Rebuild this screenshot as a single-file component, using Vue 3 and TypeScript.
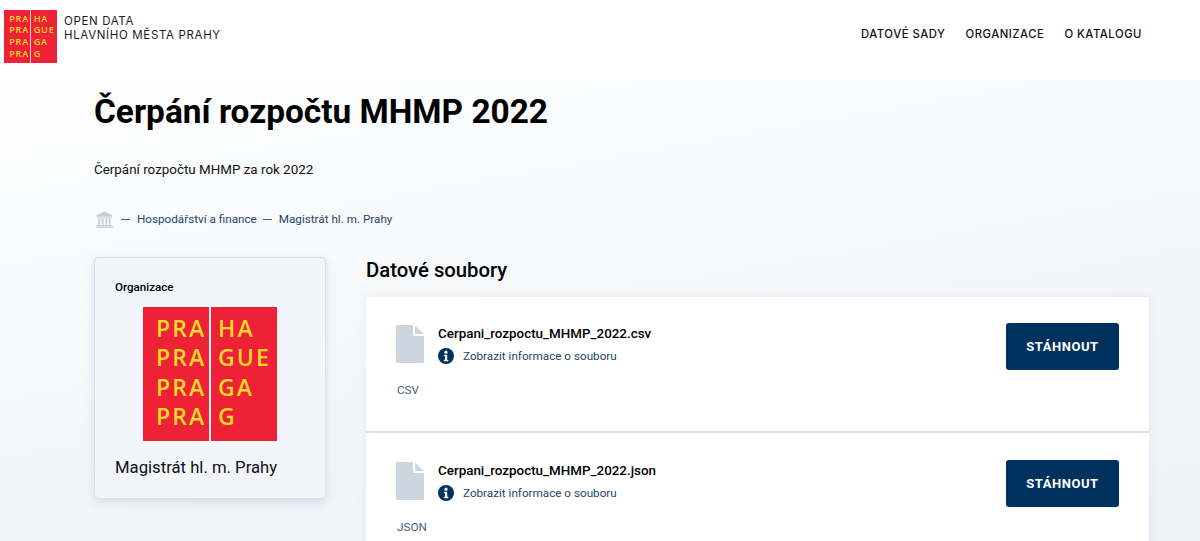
<template>
  <div class="page">
    <header class="top">
      <a class="brand">
        <svg class="logo-small" viewBox="0 0 134 134">
          <rect x="0" y="0" width="66" height="134" fill="#ef2136" />
          <rect x="68" y="0" width="66" height="134" fill="#ef2136" />
          <text v-for="(row, i) in logoRows" :key="i" :y="30 + i * 29.4" class="logo-text">
            <tspan x="13">{{ row[0] }}</tspan>
            <tspan x="75">{{ row[1] }}</tspan>
          </text>
        </svg>
        <span class="brand-name">OPEN DATA<br />HLAVNÍHO MĚSTA PRAHY</span>
      </a>
      <nav class="nav">
        <a v-for="item in nav" :key="item">{{ item }}</a>
      </nav>
    </header>

    <main class="main">
      <h1>Čerpání rozpočtu MHMP 2022</h1>
      <p class="lead">Čerpání rozpočtu MHMP za rok 2022</p>
      <div class="crumbs">
        <svg class="temple" viewBox="0 0 16 16">
          <path d="M8 0.5 15.5 4v1.4H.5V4z" />
          <rect x="1" y="6" width="14" height="1" />
          <rect x="2.2" y="7.4" width="1.7" height="5.4" />
          <rect x="5.4" y="7.4" width="1.7" height="5.4" />
          <rect x="8.9" y="7.4" width="1.7" height="5.4" />
          <rect x="12.1" y="7.4" width="1.7" height="5.4" />
          <rect x="1" y="13.2" width="14" height="1" />
          <rect x="0" y="14.5" width="16" height="1.2" />
        </svg>
        <span class="dash"></span>
        <span>Hospodářství a finance</span>
        <span class="dash"></span>
        <span>Magistrát hl. m. Prahy</span>
      </div>

      <div class="columns">
        <aside class="org">
          <div class="org-label">Organizace</div>
          <svg class="logo-big" viewBox="0 0 134 134">
            <rect x="0" y="0" width="66" height="134" fill="#ef2136" />
            <rect x="68" y="0" width="66" height="134" fill="#ef2136" />
            <text v-for="(row, i) in logoRows" :key="i" :y="30 + i * 29.4" class="logo-text">
              <tspan x="13">{{ row[0] }}</tspan>
              <tspan x="75">{{ row[1] }}</tspan>
            </text>
          </svg>
          <div class="org-name">Magistrát hl. m. Prahy</div>
        </aside>

        <section class="files">
          <h2>Datové soubory</h2>
          <article v-for="f in files" :key="f.name" class="file">
            <div class="file-top">
              <svg class="file-icon" viewBox="0 0 28 38">
                <path d="M0 1.5A1.5 1.5 0 0 1 1.5 0H17v11h11v25.5a1.5 1.5 0 0 1-1.5 1.5h-25A1.5 1.5 0 0 1 0 36.5z" />
                <path d="M19 0.5 28 9h-9z" />
              </svg>
              <div class="file-text">
                <div class="file-name">{{ f.name }}</div>
                <div class="file-info">
                  <svg class="info" viewBox="0 0 16 16">
                    <circle cx="8" cy="8" r="8" fill="#00315f" />
                    <circle cx="8" cy="4.2" r="1.6" fill="#fff" />
                    <path d="M5.9 6.8h3.3v4.9h1.1v1.5H5.9v-1.5H7V8.3H5.9z" fill="#fff" />
                  </svg>
                  <span>Zobrazit informace o souboru</span>
                </div>
              </div>
              <button class="download">STÁHNOUT</button>
            </div>
            <div class="file-format">{{ f.format }}</div>
          </article>
        </section>
      </div>
    </main>
  </div>
</template>

<script setup lang="ts">
const nav = ['DATOVÉ SADY', 'ORGANIZACE', 'O KATALOGU']
const logoRows: [string, string][] = [
  ['PRA', 'HA'],
  ['PRA', 'GUE'],
  ['PRA', 'GA'],
  ['PRA', 'G'],
]
const files = [
  { name: 'Cerpani_rozpoctu_MHMP_2022.csv', format: 'CSV' },
  { name: 'Cerpani_rozpoctu_MHMP_2022.json', format: 'JSON' },
]
</script>

<style>
html, body { margin: 0; height: 100%; overflow: hidden; background: #fff; }
</style>

<style scoped>
.page {
  height: 541px; overflow: hidden;
  font-family: Roboto, "Liberation Sans", sans-serif; color: #000;
  background: linear-gradient(170deg, #ffffff 0%, #fbfcfd 25%, #f1f4f8 75%, #eff3f7 100%);
}
.top {
  height: 80px; display: flex; justify-content: space-between; align-items: flex-start;
  background: #fff; box-sizing: border-box; padding: 10px 58px 0 4px;
}
.brand { display: flex; align-items: flex-start; gap: 7px; }
.logo-small { width: 53px; height: 53px; display: block; }
.logo-text { font-family: "Open Sans", sans-serif; font-size: 23px; font-weight: 600; letter-spacing: 2.1px; fill: #ffd92b; }
.brand-name {
  font-family: Inter, sans-serif; font-size: 11.5px; line-height: 14px; letter-spacing: 0.65px;
  color: #1c1c1c; padding-top: 4px;
}
.nav { display: flex; gap: 20px; padding-top: 17px; }
.nav a { font-family: Inter, sans-serif; font-size: 11.3px; font-weight: 500; letter-spacing: 0.52px; line-height: 15px; color: #111; }

.main { padding: 0 51px 0 94px; }
h1 { margin: 0; padding-top: 12px; font-size: 33.4px; line-height: 40px; font-weight: 700; color: #000; }
.lead { margin: 0; padding-top: 29px; font-size: 13.4px; line-height: 18px; color: #111; }
.crumbs {
  display: flex; align-items: center; gap: 6px; margin-top: 28px; height: 24px;
  font-size: 11.7px; color: #1f4468;
}
.temple { width: 17px; height: 17px; fill: #c3cedb; margin: 0 2px 0 2px; }
.dash { width: 9px; height: 1px; background: #45647f; margin-right: 1px; }

.columns { display: flex; align-items: flex-start; gap: 40px; margin-top: 26px; }
.org {
  width: 232px; height: 242px; box-sizing: border-box; flex: none;
  padding: 22px 20px 0; border: 1px solid #d8e0e9; border-radius: 4px;
  background: #f2f5f9; box-shadow: 0 3px 10px rgba(120, 140, 165, 0.22);
}
.org-label { font-size: 11.6px; line-height: 14px; font-weight: 500; color: #000; }
.logo-big { display: block; width: 134px; height: 134px; margin: 13px 0 0 28px; }
.org-name { margin-top: 17px; font-size: 16.7px; line-height: 19px; color: #111; }

.files { flex: 1; min-width: 0; }
h2 { margin: 0 0 14px; font-size: 20.3px; line-height: 26px; font-weight: 500; color: #000; }
.file {
  height: 136px; box-sizing: border-box; padding: 26px 30px 0;
  background: #fff; border-bottom: 2px solid #dde4ec;
  box-shadow: 0 0 10px rgba(150, 165, 185, 0.15);
}
.file + .file { padding-top: 27px; }
.file-top { display: flex; align-items: flex-start; height: 47px; }
.file-icon { width: 28px; height: 38px; fill: #cdd5df; flex: none; margin-top: 2px; }
.file-text { flex: 1; padding: 3px 0 0 14px; }
.file-name { font-size: 13.4px; line-height: 16px; font-weight: 500; color: #000; }
.file-info { display: flex; align-items: center; gap: 9px; margin-top: 6px; font-size: 11.7px; line-height: 16px; color: #1f4468; }
.info { width: 16px; height: 16px; flex: none; }
.download {
  width: 113px; height: 47px; border: 0; border-radius: 3px; background: #00315f; color: #fff;
  font-family: Roboto, sans-serif; font-size: 13px; font-weight: 700; letter-spacing: 0.55px;
}
.file-format { margin-top: 12px; padding-left: 1px; font-size: 11.7px; line-height: 16px; color: #46627c; }
</style>
